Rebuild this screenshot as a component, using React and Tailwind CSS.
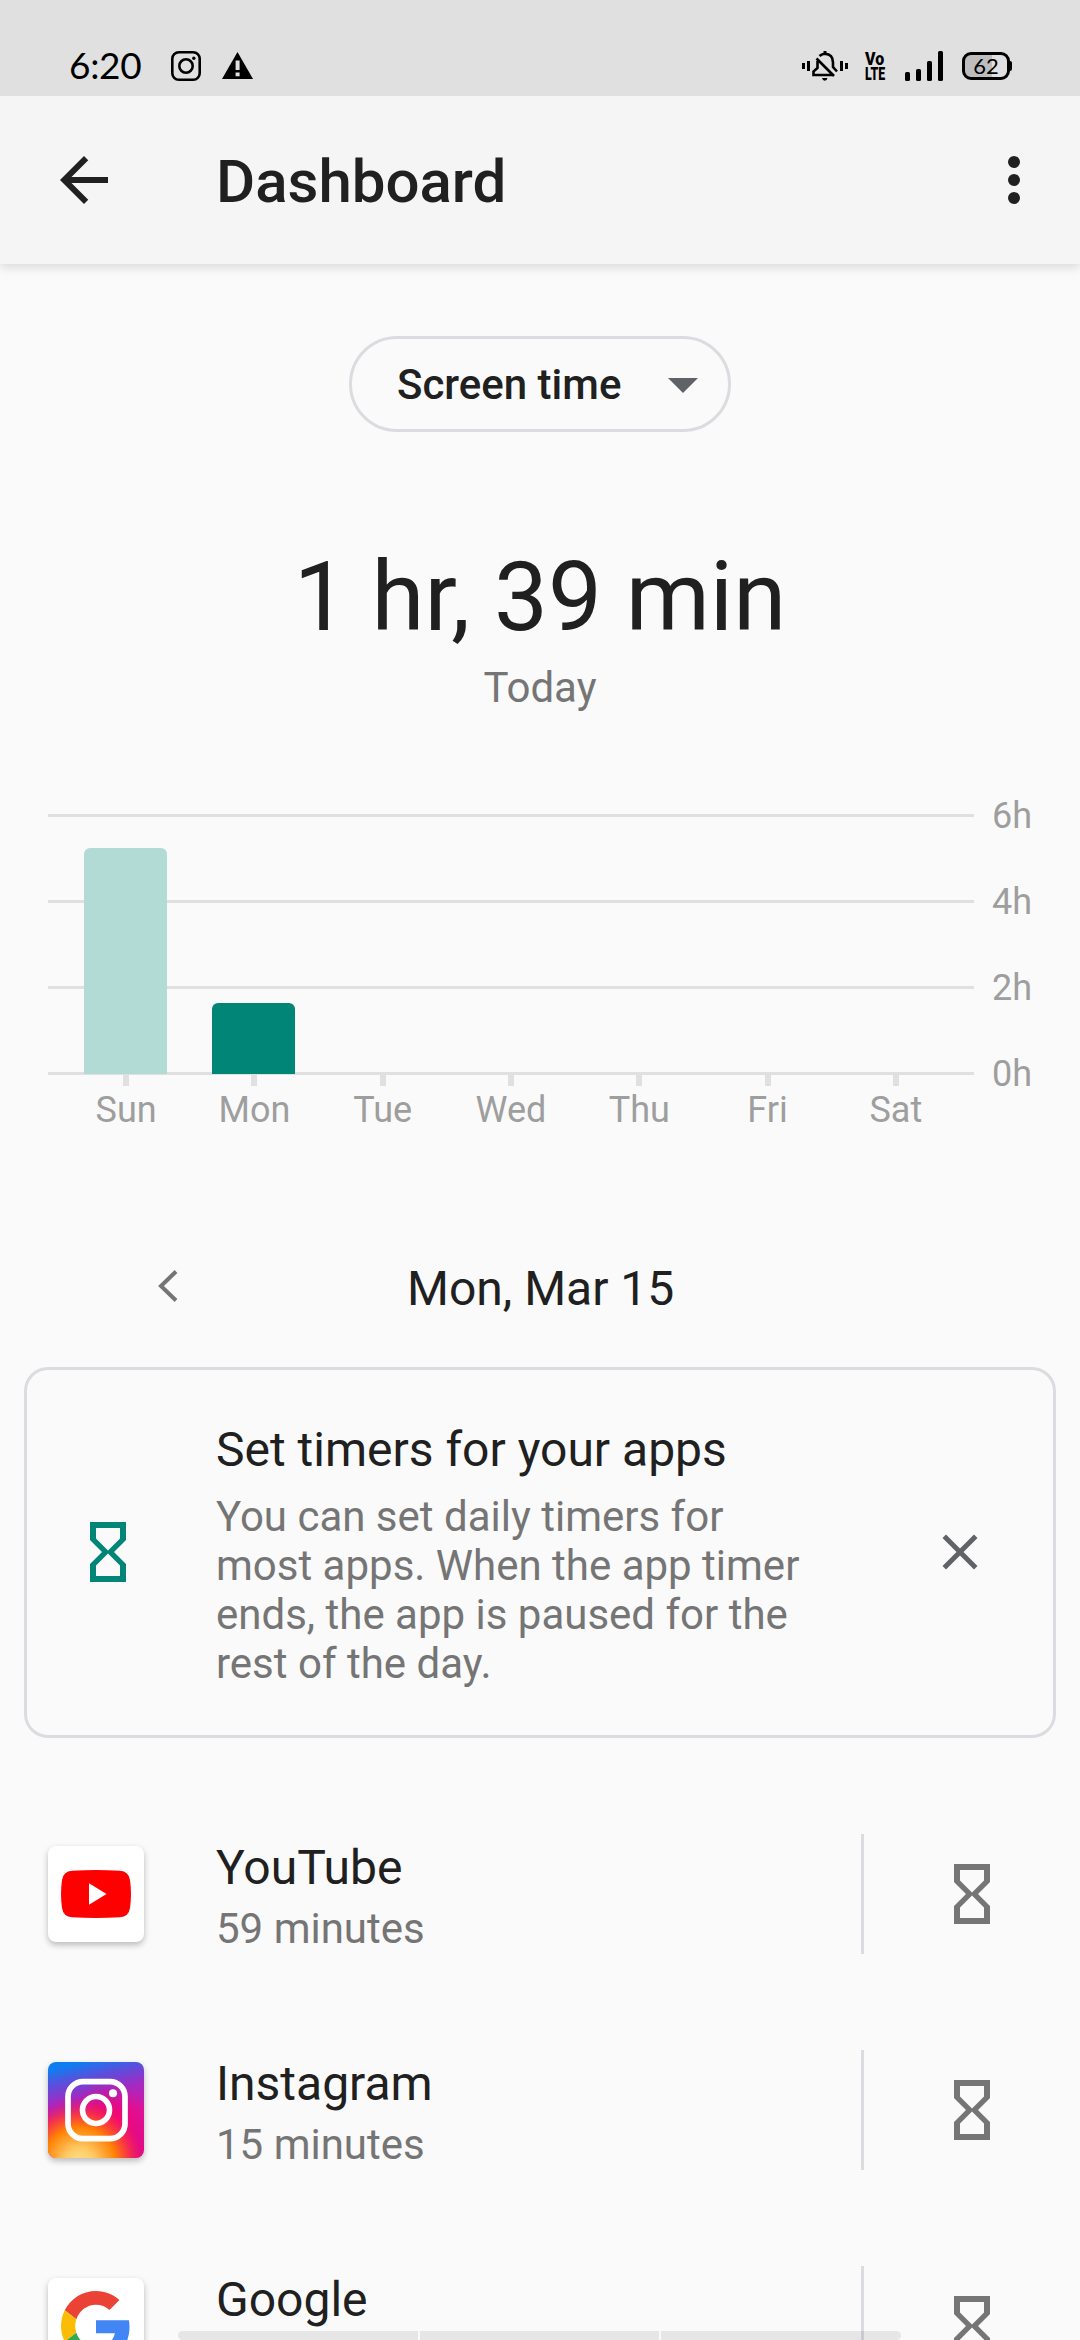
const DAYS = [
  { label: "Sun", height: 226, color: "bg-[#b2dbd6]" },
  { label: "Mon", height: 71, color: "bg-[#018577]" },
  { label: "Tue" },
  { label: "Wed" },
  { label: "Thu" },
  { label: "Fri" },
  { label: "Sat" },
];

const HOURS = ["6h", "4h", "2h", "0h"];

const APPS = [
  { name: "YouTube", time: "59 minutes", Icon: YouTubeIcon },
  { name: "Instagram", time: "15 minutes", Icon: InstagramIcon },
  { name: "Google", Icon: GoogleIcon },
];

function YouTubeIcon() {
  return (
    <svg className="size-24" viewBox="0 0 96 96">
      <path
        fill="#f00"
        d="M24 24.7Q48 23.300 72 24.700Q80.800 25.400 82 34Q84 48 82 62Q80.800 70.600 72 71.300Q48 72.700 24 71.300Q15.200 70.600 14 62Q12 48 14 34Q15.200 25.400 24 24.700z"
      />
      <path fill="#fff" d="M41 37.300L58.500 48L41 58.700z" />
    </svg>
  );
}

function InstagramIcon() {
  return (
    <svg className="size-24" viewBox="0 0 96 96">
      <defs>
        <linearGradient id="ig-base" x1="0.36" y1="0" x2="0.6" y2="1">
          <stop offset="0" stopColor="#0f7df0" />
          <stop offset="0.16" stopColor="#5a4fdc" />
          <stop offset="0.34" stopColor="#a02bc4" />
          <stop offset="0.6" stopColor="#d8149f" />
          <stop offset="1" stopColor="#e00a86" />
        </linearGradient>
        <radialGradient id="ig-pink" cx="0.62" cy="0.62" r="0.42">
          <stop offset="0" stopColor="#fa0068" />
          <stop offset="1" stopColor="#fa0068" stopOpacity="0" />
        </radialGradient>
        <radialGradient id="ig-warm" cx="0.33" cy="1.06" r="0.7">
          <stop offset="0" stopColor="#ffe78f" />
          <stop offset="0.24" stopColor="#ffc862" />
          <stop offset="0.54" stopColor="#ff8204" />
          <stop offset="0.74" stopColor="#fc3a3a" stopOpacity="0.85" />
          <stop offset="1" stopColor="#e8047c" stopOpacity="0" />
        </radialGradient>
      </defs>
      <rect width="96" height="96" fill="url(#ig-base)" />
      <rect width="96" height="96" fill="url(#ig-pink)" />
      <rect width="96" height="96" fill="url(#ig-warm)" />
      <g fill="none" stroke="#fff">
        <rect x="20" y="19.700" width="57" height="57" rx="15" strokeWidth="5.700" />
        <circle cx="48" cy="48" r="13.500" strokeWidth="5.600" />
      </g>
      <circle cx="65" cy="31.300" r="4" fill="#fff" />
    </svg>
  );
}

function GoogleIcon() {
  return (
    <svg className="size-[70px]" viewBox="0 0 48 48">
      <path fill="#ea4335" d="M24 9.500c3.540 0 6.710 1.220 9.210 3.600l6.850-6.850C35.900 2.380 30.470 0 24 0 14.620 0 6.510 5.380 2.560 13.220l7.980 6.190C12.430 13.720 17.740 9.500 24 9.500z" />
      <path fill="#4285f4" d="M46.980 24.550c0-1.570-.15-3.090-.38-4.550H24v9.020h12.940c-.58 2.960-2.260 5.480-4.780 7.180l7.730 6c4.510-4.180 7.090-10.360 7.090-17.650z" />
      <path fill="#fbbc05" d="M10.530 28.590c-.48-1.450-.76-2.990-.76-4.590s.27-3.140.76-4.590l-7.980-6.190C.92 16.460 0 20.120 0 24c0 3.880.92 7.540 2.560 10.780l7.970-6.190z" />
      <path fill="#34a853" d="M24 48c6.480 0 11.930-2.130 15.890-5.810l-7.730-6c-2.150 1.450-4.920 2.300-8.160 2.300-6.260 0-11.570-4.220-13.470-9.910l-7.980 6.190C6.510 42.620 14.620 48 24 48z" />
    </svg>
  );
}

function Hourglass({ className }) {
  return (
    <svg className={className} viewBox="0 0 24 24" fill="currentColor">
      <path d="M6 2v6h.01L6 8.010 10 12l-4 4 .01.01H6V22h12v-5.990h-.01L18 16l-4-4 4-3.990-.01-.01H18V2H6zm10 14.500V20H8v-3.500l4-4 4 4zm-4-5l-4-4V4h8v3.500l-4 4z" />
    </svg>
  );
}

function StatusBar() {
  return (
    <header className="z-20 flex h-24 shrink-0 items-start bg-[#e0e0e0] pt-[51px] pr-[68px] pl-[69px] text-black">
      <span className="-mt-px w-[102px] font-[Lato] text-[37px] leading-[30px] tracking-[-0.3px]">6:20</span>
      <svg className="size-[30px]" viewBox="0 0 30 30" fill="none" stroke="currentColor" strokeWidth="2.600">
        <rect x="1.300" y="1.300" width="27.400" height="27.400" rx="6.500" />
        <circle cx="15" cy="15" r="6.700" />
        <circle cx="22.800" cy="7.300" r="1.700" fill="currentColor" stroke="none" />
      </svg>
      <svg className="ml-[21px] h-[30px] w-[31px]" viewBox="0 0 31 30">
        <path d="M15.500 1L31 28H0z" />
        <path fill="#e0e0e0" d="M13.600 9.500h4v9.500h-4zM13.600 21.500h4v3.800h-4z" />
      </svg>

      <div className="ml-auto flex items-start">
        {/* Bell, muted and vibrating */}
        <svg className="h-[30px] w-[46px]" viewBox="0 0 46 30">
          <path d="M0 12h3v6H0zM5 10h3v10H5zM38 10h3v10h-3zM43 12h3v6h-3zM21.500 0h3v3h-3zM20 27h5.500q-.5 2.700-2.700 2.700T20 27z" />
          <path
            fill="none"
            stroke="currentColor"
            strokeWidth="2.600"
            d="M17.500 5Q20 2.700 23 2.700Q31 3.200 31 11.500V16L35 20.500M14.500 7.500L32 25M15.500 10V17L11.500 20.500V24H30"
          />
        </svg>
        <div className="ml-[17px] flex w-[23px] flex-col items-start font-[Roboto] font-black">
          <span className="h-[15px] origin-left scale-x-[0.84] text-[19px] leading-[15px]">Vo</span>
          <span className="h-[15px] origin-left scale-x-[0.65] text-[19px] leading-[15px]">LTE</span>
        </div>
        <svg className="ml-[17px] h-[30px] w-[38px]" viewBox="0 0 38 30">
          <rect y="21" width="5" height="9" rx="1.500" />
          <rect x="11" y="18" width="5" height="12" rx="1.500" />
          <rect x="22" y="10" width="5" height="20" rx="1.500" />
          <rect x="33" width="5" height="30" rx="1.500" />
        </svg>
        <div className="mt-px ml-[19px] flex items-center">
          <div className="flex h-7 w-12 items-center justify-center rounded-[9px] border-3 border-black bg-linear-to-r from-[#bdbdbd] from-65% to-[#e0e0e0] to-65% font-[Lato] text-[22px] leading-none">
            62
          </div>
          <span className="h-2.5 w-0.5 rounded-r-sm bg-black" />
        </div>
      </div>
    </header>
  );
}

function Toolbar() {
  return (
    <div className="z-10 flex h-[168px] shrink-0 items-center bg-[#f5f5f5] pr-[30px] pl-12 text-[#202020] shadow-[0_3px_10px_rgba(0,0,0,0.14)]">
      <svg className="size-18" viewBox="0 0 24 24" fill="currentColor">
        <path d="M20 11H7.830l5.590-5.590L12 4l-8 8 8 8 1.410-1.410L7.830 13H20v-2z" />
      </svg>
      <h1 className="ml-24 pt-1 text-[60px] leading-[70px] font-medium">Dashboard</h1>
      <svg className="ml-auto size-18" viewBox="0 0 24 24" fill="currentColor">
        <circle cx="12" cy="6" r="2" />
        <circle cx="12" cy="12" r="2" />
        <circle cx="12" cy="18" r="2" />
      </svg>
    </div>
  );
}

function Chart() {
  return (
    <section className="mt-[81px] grid h-[340px] shrink-0 grid-cols-[926px_1fr] pl-12 text-[36px] leading-[42px] text-[#9e9e9e]">
      <div className="col-start-1 row-start-1 flex flex-col gap-[83px] pt-[21px]">
        {HOURS.map((hour) => (
          <div key={hour} className="h-[3px] shrink-0 bg-[#e0e0e0]" />
        ))}
      </div>
      <div className="z-10 col-start-1 row-start-1 flex px-3.5">
        {DAYS.map((day) => (
          <div key={day.label} className="flex flex-1 flex-col items-center">
            <div className="flex h-[281px] items-end">
              {day.height && (
                <div className={`mr-px w-[83px] rounded-t-[6px] ${day.color}`} style={{ height: day.height }} />
              )}
            </div>
            <div className="h-3 w-1.5 bg-[#e0e0e0]" />
            <span className="mt-[3px]">{day.label}</span>
          </div>
        ))}
      </div>
      <div className="col-start-2 row-start-1 flex flex-col gap-11 pt-0.5 pl-[18px]">
        {HOURS.map((hour) => (
          <span key={hour}>{hour}</span>
        ))}
      </div>
    </section>
  );
}

function TimerCard() {
  return (
    <section className="mx-6 mt-8 flex h-[371px] shrink-0 items-center rounded-3xl border-3 border-[#dadce0] pl-[45px]">
      <Hourglass className="mb-px size-18 shrink-0 text-[#018577]" />
      <div className="ml-[72px] w-[600px] pt-1">
        <h2 className="text-[48px] leading-14">Set timers for your apps</h2>
        <p className="mt-3.5 text-[42px] leading-[49px] text-[#757575]">
          You can set daily timers for
          <br />
          most apps. When the app timer
          <br />
          ends, the app is paused for the
          <br />
          rest of the day.
        </p>
      </div>
      <svg className="mb-px ml-[114px] size-[60px] text-[#5f6368]" viewBox="0 0 24 24" fill="currentColor">
        <path d="M19 6.410L17.590 5 12 10.590 6.410 5 5 6.410 10.590 12 5 17.590 6.410 19 12 13.410 17.590 19 19 17.590 13.410 12z" />
      </svg>
    </section>
  );
}

function AppRow({ name, time, Icon }) {
  return (
    <li className="flex h-[216px] shrink-0 items-center pl-12">
      <div className="flex size-24 items-center justify-center overflow-hidden rounded-lg bg-white shadow-[0_3px_6px_rgba(0,0,0,0.26)]">
        <Icon />
      </div>
      <div className="ml-[72px] w-[645px] pt-1">
        <p className="text-[48px] leading-14">{name}</p>
        <p className="mt-2 h-[49px] text-[42px] leading-[49px] text-[#757575]">{time}</p>
      </div>
      <div className="h-[120px] w-[3px] bg-[#dadce0]" />
      <Hourglass className="ml-18 size-18 text-[#757575]" />
    </li>
  );
}

export default function App() {
  return (
    <div className="relative flex h-[2340px] w-[1080px] flex-col overflow-hidden bg-[#fafafa] font-[Roboto,sans-serif] text-[#202020]">
      <StatusBar />
      <Toolbar />

      <button className="mt-18 flex h-24 w-[382px] shrink-0 items-center self-center rounded-full border-3 border-[#dadce0] pl-[45px] text-[42px] font-medium">
        Screen time
        <svg className="ml-auto mr-[9px] size-18 text-[#5f6368]" viewBox="0 0 24 24" fill="currentColor">
          <path d="M7 10l5 5 5-5z" />
        </svg>
      </button>

      <div className="mt-[109px] shrink-0 text-center">
        <p className="text-[96px] leading-[112px]">1 hr, 39 min</p>
        <p className="mt-2.5 text-[42px] leading-[49px] text-[#757575]">Today</p>
      </div>

      <Chart />

      <div className="mt-32 flex h-[74px] shrink-0 items-start">
        <svg className="mt-[9px] ml-[158px] h-8 w-5 text-[#757575]" viewBox="0 0 20 32" fill="none" stroke="currentColor" strokeWidth="4">
          <path d="M18 1.500L3 16l15 14.500" />
        </svg>
        <span className="ml-[229px] text-[48px] leading-14">Mon, Mar 15</span>
      </div>

      <TimerCard />

      <ul className="mt-12 flex shrink-0 flex-col">
        {APPS.map((app) => (
          <AppRow key={app.name} {...app} />
        ))}
      </ul>

      {/* Gesture bar */}
      <div className="absolute bottom-0 left-[178px] flex h-[9px] w-[723px] gap-0.5 overflow-hidden rounded-full">
        <span className="flex-1 bg-black/8" />
        <span className="flex-1 bg-black/8" />
        <span className="flex-1 bg-black/8" />
      </div>
    </div>
  );
}
